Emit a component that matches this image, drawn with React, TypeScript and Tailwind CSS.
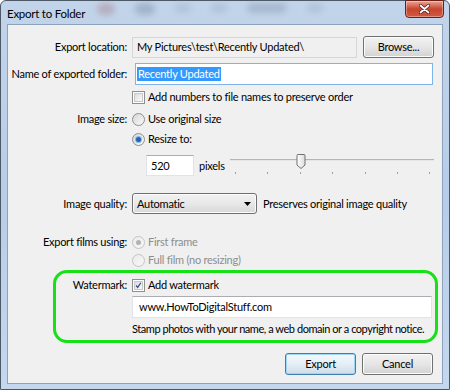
import React from "react";

const font = { fontFamily: 'Lato, "Open Sans", sans-serif' };

function Checkbox({ checked }: { checked?: boolean }) {
  return (
    <div className="w-[13px] h-[13px] border border-[#8e8f8f] bg-white p-[1px] shrink-0">
      <div className="w-full h-full border border-[#c8c8c8] bg-gradient-to-br from-[#dcdcdc] to-[#fbfbfb] flex items-center justify-center">
        {checked && (
          <svg width="9" height="9" viewBox="0 0 9 9">
            <path d="M1.5 4.5 L3.5 7 L7.5 1" fill="none" stroke="#3a4f8a" strokeWidth="1.6" />
          </svg>
        )}
      </div>
    </div>
  );
}

function Radio({ checked, disabled }: { checked?: boolean; disabled?: boolean }) {
  return (
    <div
      className={
        "w-[13px] h-[13px] rounded-full border shrink-0 flex items-center justify-center " +
        (disabled
          ? "border-[#c4c4c4] bg-gradient-to-br from-[#ececec] to-[#f7f7f7]"
          : "border-[#8e8f8f] bg-gradient-to-br from-[#d6d6d6] to-[#fafafa]")
      }
    >
      {checked && (
        <div
          className={
            "w-[5px] h-[5px] rounded-full " +
            (disabled ? "bg-[#b2b2b2]" : "bg-[#2466b5] ring-1 ring-[#8ab8e6]")
          }
        />
      )}
    </div>
  );
}

function Button({ children, primary }: { children: React.ReactNode; primary?: boolean }) {
  return (
    <div
      className={
        "w-[71px] h-[22px] rounded-[3px] border flex items-center justify-center text-black " +
        (primary
          ? "border-[#3c7fb1] bg-gradient-to-b from-[#f4f9fd] via-[#e5eef6] to-[#cfdde9] shadow-[inset_0_0_0_1px_#9fd6f4]"
          : "border-[#707070] bg-gradient-to-b from-[#f2f2f2] via-[#e6e6e6] to-[#d2d2d2] shadow-[inset_0_0_0_1px_#fcfcfc]")
      }
    >
      {children}
    </div>
  );
}

export default function App() {
  const ticks = [235, 267, 300, 332, 365, 397, 429];
  return (
    <div style={font} className="w-[450px] h-[390px] overflow-hidden bg-white">
      <div className="w-[450px] h-[390px] border border-[#4d5866] rounded-t-[6px] bg-gradient-to-b from-[#c2d4ea] via-[#b7cde8] to-[#c4d7ee] flex flex-col px-[6px] pb-[5px] text-[11px] tracking-[-0.25px] text-black leading-[14px]">
        {/* title bar */}
        <div className="h-[23px] flex items-start relative">
          <div className="pt-[5px] text-[11.5px] text-black leading-[16px]">Export to Folder</div>
          <div className="absolute left-[90px] top-[2px] w-[300px] h-[18px] flex gap-[20px] opacity-30">
            <div className="w-[18px] h-[12px] rounded-full bg-[#9a5a5a] blur-[3px]" />
            <div className="w-[20px] h-[12px] rounded-full bg-[#5a6a80] blur-[3px]" />
            <div className="w-[16px] h-[10px] rounded-full bg-[#8aa0b8] blur-[3px]" />
            <div className="w-[16px] h-[10px] rounded-full bg-[#8aa0b8] blur-[3px]" />
            <div className="w-[40px] h-[10px] rounded-full bg-[#6a7a90] blur-[3px]" />
            <div className="w-[16px] h-[10px] rounded-full bg-[#8aa0b8] blur-[3px]" />
          </div>
          <div className="absolute right-[-1px] top-[-1px] w-[39px] h-[18px] rounded-b-[4px] border border-[#6b1f1a] bg-gradient-to-b from-[#e8a493] via-[#c7452f] to-[#d2593f] flex items-center justify-center shadow-[inset_0_0_0_1px_rgba(255,255,255,0.35)]">
            <svg width="11" height="10" viewBox="0 0 11 10">
              <path d="M1.5 1.5 L9.5 8.5 M9.5 1.5 L1.5 8.5" stroke="#4a1a14" strokeWidth="3.2" strokeLinecap="round" />
              <path d="M1.5 1.5 L9.5 8.5 M9.5 1.5 L1.5 8.5" stroke="#ffffff" strokeWidth="1.8" strokeLinecap="round" />
            </svg>
          </div>
        </div>

        {/* client */}
        <div className="flex-1 bg-[#f0f0f0] border border-[#8da2bd] flex flex-col">
          {/* Export location */}
          <div className="mt-[11px] h-[22px] flex items-center">
            <div className="w-[119px] text-right whitespace-nowrap">Export location:</div>
            <div className="ml-[5px] w-[225px] h-[21px] border border-[#d6d6d6] bg-[#f0f0f0] flex items-center pl-[4px] whitespace-nowrap">
              My Pictures\test\Recently Updated\
            </div>
            <div className="ml-[6px]">
              <Button>Browse...</Button>
            </div>
          </div>

          {/* Name of exported folder */}
          <div className="mt-[5px] h-[22px] flex items-center">
            <div className="w-[119px] text-right whitespace-nowrap">Name of exported folder:</div>
            <div className="ml-[8px] w-[298px] h-[22px] border border-[#7eb4ea] bg-white flex items-center pl-[1px]">
              <span className="bg-[#3399ff] text-white leading-[14px] px-[1px] whitespace-nowrap">Recently Updated</span>
            </div>
          </div>

          {/* add numbers */}
          <div className="mt-[4px] h-[16px] flex items-center">
            <div className="w-[119px]" />
            <div className="ml-[5px] flex items-center gap-[3px]">
              <Checkbox />
              <span className="whitespace-nowrap">Add numbers to file names to preserve order</span>
            </div>
          </div>

          {/* Image size */}
          <div className="mt-[6px] h-[16px] flex items-center">
            <div className="w-[119px] text-right">Image size:</div>
            <div className="ml-[5px] flex items-center gap-[3px]">
              <Radio />
              <span>Use original size</span>
            </div>
          </div>
          <div className="mt-[4px] h-[16px] flex items-center">
            <div className="w-[119px]" />
            <div className="ml-[5px] flex items-center gap-[3px]">
              <Radio checked />
              <span>Resize to:</span>
            </div>
          </div>

          {/* size input + slider */}
          <div className="mt-[8px] h-[21px] flex items-center">
            <div className="w-[138px]" />
            <div className="w-[48px] h-[21px] border border-[#e2e3ea] border-t-[#abadb3] bg-white flex items-center pl-[4px]">
              520
            </div>
            <div className="ml-[5px] w-[31px]">pixels</div>
            <div className="relative w-[204px] h-[21px]">
              <div className="absolute left-0 right-0 top-[4px] h-[1px] bg-[#b5b5b5]" />
              <div className="absolute left-0 right-0 top-[5px] h-[1px] bg-[#e6e6e6]" />
              <svg className="absolute left-[66px] top-[-1px]" width="10" height="15" viewBox="0 0 10 15">
                <defs>
                  <linearGradient id="th" x1="0" y1="0" x2="1" y2="0">
                    <stop offset="0" stopColor="#ffffff" />
                    <stop offset="1" stopColor="#dcdcdc" />
                  </linearGradient>
                </defs>
                <path d="M1 1.5 Q1 0.5 2 0.5 L8 0.5 Q9 0.5 9 1.5 L9 11 L5 14.5 L1 11 Z" fill="url(#th)" stroke="#707070" strokeWidth="1" />
              </svg>
              {ticks.map((x) => (
                <div key={x} className="absolute top-[17px] w-[1px] h-[2px] bg-[#a0a0a0]" style={{ left: x - 230 }} />
              ))}
            </div>
          </div>

          {/* Image quality */}
          <div className="mt-[17px] h-[21px] flex items-center">
            <div className="w-[119px] text-right">Image quality:</div>
            <div className="ml-[5px] w-[125px] h-[21px] rounded-[3px] border border-[#707070] bg-gradient-to-b from-[#f2f2f2] via-[#e8e8e8] to-[#d8d8d8] shadow-[inset_0_0_0_1px_#fbfbfb] flex items-center pl-[4px] pr-[5px]">
              <span className="flex-1">Automatic</span>
              <svg width="7" height="4" viewBox="0 0 7 4">
                <path d="M0 0 L7 0 L3.5 4 Z" fill="#000" />
              </svg>
            </div>
            <div className="ml-[6px] whitespace-nowrap">Preserves original image quality</div>
          </div>

          {/* Export films */}
          <div className="mt-[20px] h-[16px] flex items-center">
            <div className="w-[119px] text-right whitespace-nowrap">Export films using:</div>
            <div className="ml-[5px] flex items-center gap-[3px] text-[#8d8d8d]">
              <Radio checked disabled />
              <span>First frame</span>
            </div>
          </div>
          <div className="mt-[2px] h-[16px] flex items-center">
            <div className="w-[119px]" />
            <div className="ml-[5px] flex items-center gap-[3px] text-[#8d8d8d]">
              <Radio disabled />
              <span>Full film (no resizing)</span>
            </div>
          </div>

          {/* Watermark (highlighted) */}
          <div className="mt-[2px] ml-[45px] w-[385px] h-[73px] border-[3px] border-[#16e016] rounded-[14px] flex flex-col pt-[4px]">
            <div className="h-[16px] flex items-center">
              <div className="w-[71px] text-right">Watermark:</div>
              <div className="ml-[5px] flex items-center gap-[3px]">
                <Checkbox checked />
                <span>Add watermark</span>
              </div>
            </div>
            <div className="mt-[3px] h-[22px] flex items-center">
              <div className="w-[76px] shrink-0" />
              <div className="w-[300px] h-[22px] border border-[#e2e3ea] border-t-[#abadb3] bg-white flex items-center pl-[6px]">
                www.HowToDigitalStuff.com
              </div>
            </div>
            <div className="mt-[3px] h-[16px] flex items-center">
              <div className="w-[76px] shrink-0" />
              <div className="whitespace-nowrap tracking-[-0.45px]">Stamp photos with your name, a web domain or a copyright notice.</div>
            </div>
          </div>

          {/* buttons */}
          <div className="mt-[10px] flex justify-end gap-[6px] pr-[9px]">
            <Button primary>Export</Button>
            <Button>Cancel</Button>
          </div>
        </div>
      </div>
    </div>
  );
}
